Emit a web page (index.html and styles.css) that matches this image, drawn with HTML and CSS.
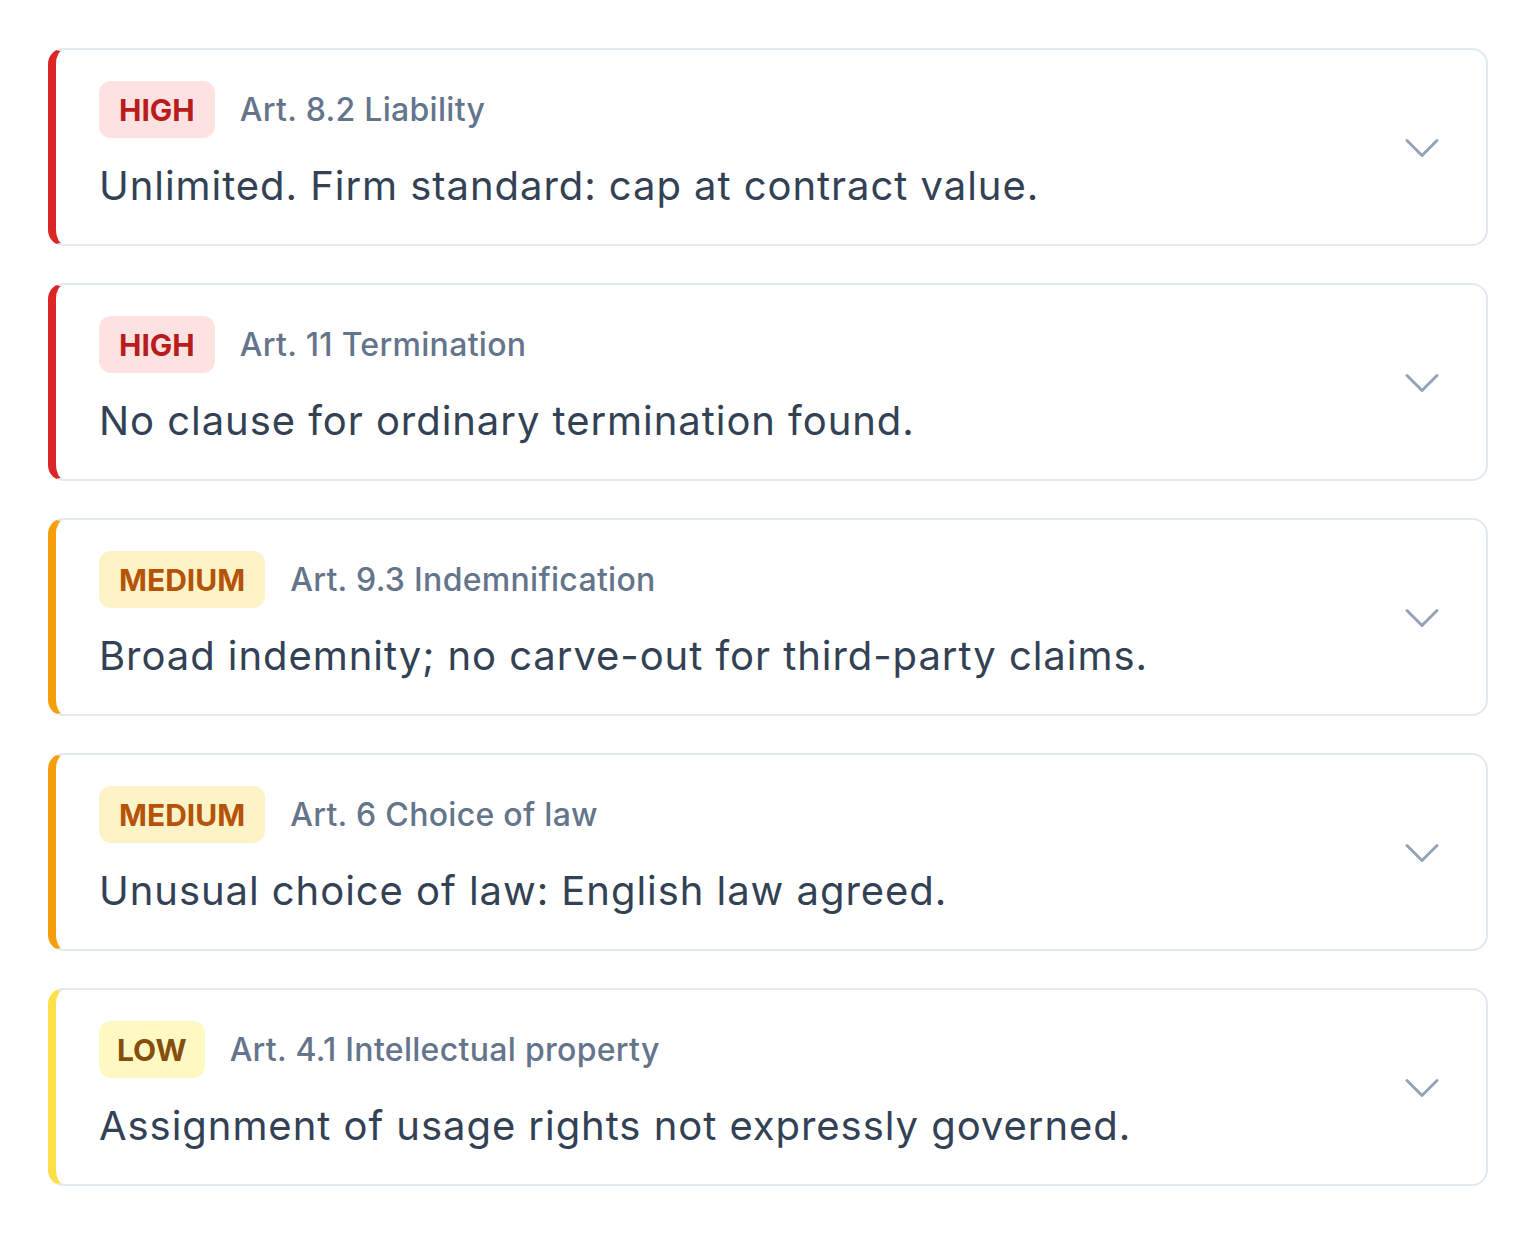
FILE: index.html
```html
<!DOCTYPE html>
<html lang="en">
<head>
  <meta charset="UTF-8">
  <title>Contract review – findings</title>
  <link rel="stylesheet" href="styles.css">
</head>
<body>

  <div class="findings">

    <div class="finding high">
      <div class="finding-main">
        <div class="finding-head">
          <span class="badge">HIGH</span>
          <span class="clause">Art. 8.2 Liability</span>
        </div>
        <p class="finding-text">Unlimited. Firm standard: cap at contract value.</p>
      </div>
      <svg class="chevron" viewBox="0 0 24 24" fill="none" stroke="currentColor" stroke-width="1.5">
        <path stroke-linecap="round" stroke-linejoin="round" d="m19.5 8.25-7.5 7.5-7.5-7.5"/>
      </svg>
    </div>

    <div class="finding high">
      <div class="finding-main">
        <div class="finding-head">
          <span class="badge">HIGH</span>
          <span class="clause">Art. 11 Termination</span>
        </div>
        <p class="finding-text">No clause for ordinary termination found.</p>
      </div>
      <svg class="chevron" viewBox="0 0 24 24" fill="none" stroke="currentColor" stroke-width="1.5">
        <path stroke-linecap="round" stroke-linejoin="round" d="m19.5 8.25-7.5 7.5-7.5-7.5"/>
      </svg>
    </div>

    <div class="finding medium">
      <div class="finding-main">
        <div class="finding-head">
          <span class="badge">MEDIUM</span>
          <span class="clause">Art. 9.3 Indemnification</span>
        </div>
        <p class="finding-text">Broad indemnity; no carve-out for third-party claims.</p>
      </div>
      <svg class="chevron" viewBox="0 0 24 24" fill="none" stroke="currentColor" stroke-width="1.5">
        <path stroke-linecap="round" stroke-linejoin="round" d="m19.5 8.25-7.5 7.5-7.5-7.5"/>
      </svg>
    </div>

    <div class="finding medium">
      <div class="finding-main">
        <div class="finding-head">
          <span class="badge">MEDIUM</span>
          <span class="clause">Art. 6 Choice of law</span>
        </div>
        <p class="finding-text">Unusual choice of law: English law agreed.</p>
      </div>
      <svg class="chevron" viewBox="0 0 24 24" fill="none" stroke="currentColor" stroke-width="1.5">
        <path stroke-linecap="round" stroke-linejoin="round" d="m19.5 8.25-7.5 7.5-7.5-7.5"/>
      </svg>
    </div>

    <div class="finding low">
      <div class="finding-main">
        <div class="finding-head">
          <span class="badge">LOW</span>
          <span class="clause">Art. 4.1 Intellectual property</span>
        </div>
        <p class="finding-text">Assignment of usage rights not expressly governed.</p>
      </div>
      <svg class="chevron" viewBox="0 0 24 24" fill="none" stroke="currentColor" stroke-width="1.5">
        <path stroke-linecap="round" stroke-linejoin="round" d="m19.5 8.25-7.5 7.5-7.5-7.5"/>
      </svg>
    </div>

  </div>

</body>
</html>
```

FILE: styles.css
```css
body {
  margin: 0;
  padding: 48px;
  background: #ffffff;
  font-family: Inter, "Noto Sans", sans-serif;
  color: #334155;
}

.findings {
  display: flex;
  flex-direction: column;
  gap: 37px;
}

.finding {
  display: flex;
  align-items: center;
  gap: 24px;
  padding: 31px 40px 30px 43px;
  background: #ffffff;
  border: 2px solid #e2e8f0;
  border-left-width: 8px;
  border-radius: 16px;
}

.finding.high {
  border-left-color: #dc2626;
}

.finding.medium {
  border-left-color: #f59e0b;
}

.finding.low {
  border-left-color: #fde047;
}

.finding-main {
  flex: 1;
  display: flex;
  flex-direction: column;
  gap: 20px;
}

.finding-head {
  display: flex;
  align-items: center;
  gap: 25px;
}

.badge {
  display: inline-flex;
  align-items: center;
  height: 57px;
  padding: 0 20px;
  border-radius: 12px;
  font-size: 30px;
  font-weight: 700;
}

.high .badge {
  background: #fee2e2;
  color: #b91c1c;
}

.medium .badge {
  background: #fef3c7;
  color: #b45309;
}

.low .badge {
  background: #fef9c3;
  color: #854d0e;
  padding: 0 18px;
}

.clause {
  font-size: 32px;
  font-weight: 500;
  letter-spacing: 0.3px;
  color: #64748b;
}

.finding-text {
  margin: 0;
  font-size: 40px;
  line-height: 56px;
  letter-spacing: 0.95px;
  color: #334155;
}

.chevron {
  width: 48px;
  height: 48px;
  color: #94a3b8;
  flex-shrink: 0;
}
```
